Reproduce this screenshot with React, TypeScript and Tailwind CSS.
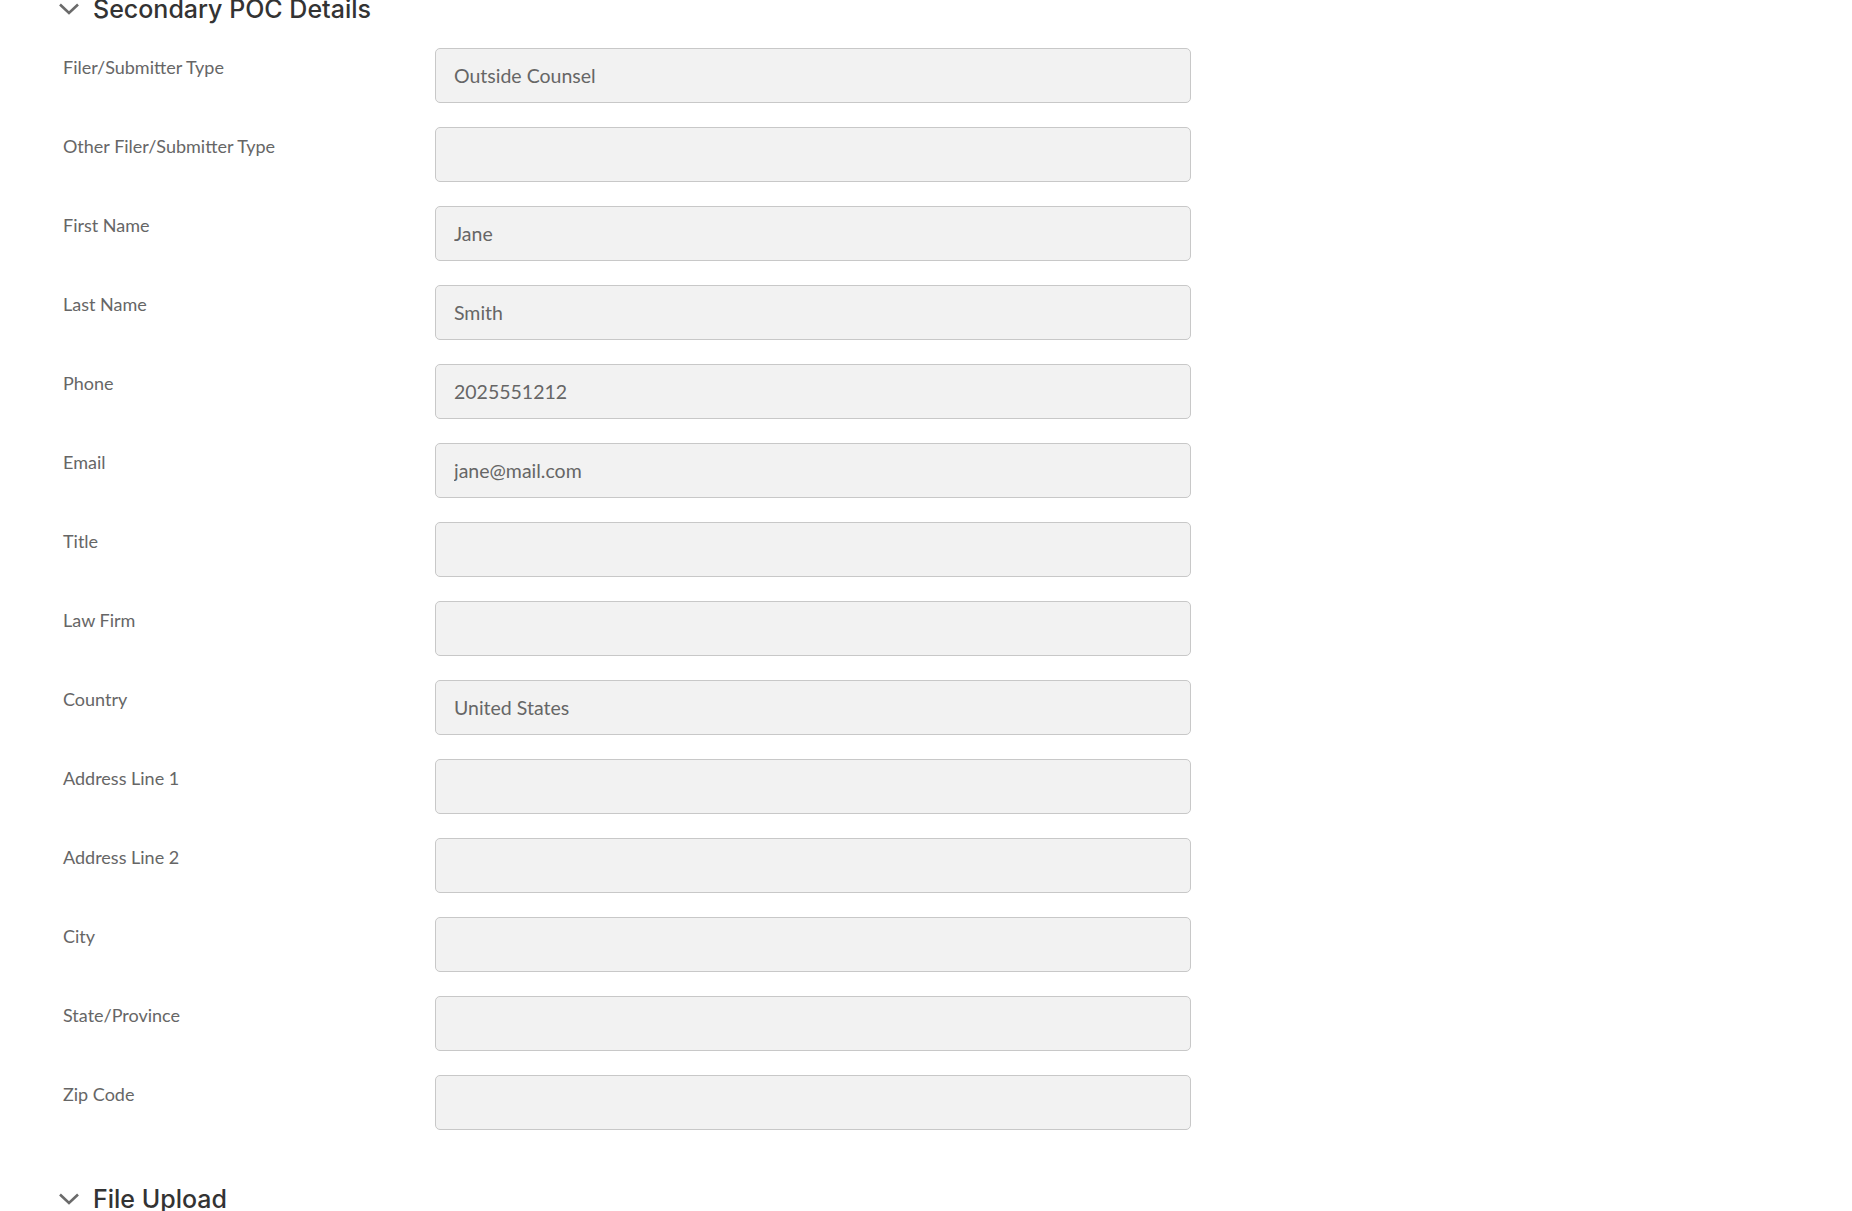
import React from 'react';

const fields: { label: string; value: string }[] = [
  { label: 'Filer/Submitter Type', value: 'Outside Counsel' },
  { label: 'Other Filer/Submitter Type', value: '' },
  { label: 'First Name', value: 'Jane' },
  { label: 'Last Name', value: 'Smith' },
  { label: 'Phone', value: '2025551212' },
  { label: 'Email', value: 'jane@mail.com' },
  { label: 'Title', value: '' },
  { label: 'Law Firm', value: '' },
  { label: 'Country', value: 'United States' },
  { label: 'Address Line 1', value: '' },
  { label: 'Address Line 2', value: '' },
  { label: 'City', value: '' },
  { label: 'State/Province', value: '' },
  { label: 'Zip Code', value: '' },
];

function Chevron() {
  return (
    <svg width="22" height="12" viewBox="0 0 22 12" fill="none" className="shrink-0">
      <path d="M2 1.5 L11 10 L20 1.5" stroke="#6b6b6b" strokeWidth="2.6" strokeLinecap="butt" />
    </svg>
  );
}

function SectionHeader({ title }: { title: string }) {
  return (
    <div className="flex items-center h-[34px] pl-[58px]">
      <Chevron />
      <h2 className="ml-[13px] text-[25px] leading-[34px] font-medium text-[#333] font-['Inter',sans-serif]">
        {title}
      </h2>
    </div>
  );
}

export default function App() {
  return (
    <div className="min-h-screen bg-white overflow-hidden">
      <div className="-mt-[8px]">
        <SectionHeader title="Secondary POC Details" />
        <div className="mt-[22px] flex flex-col gap-[24px]">
          {fields.map((f) => (
            <div key={f.label} className="flex items-start pl-[63px]">
              <label className="w-[372px] shrink-0 pt-[7px] text-[18px] leading-[24px] text-[#666] font-['Lato',sans-serif]">
                {f.label}
              </label>
              <input
                readOnly
                value={f.value}
                className="w-[756px] h-[55px] rounded-[5px] border border-[#c8c8c8] bg-[#f2f2f2] px-[18px] text-[19.5px] text-[#666] font-['Lato',sans-serif] outline-none"
              />
            </div>
          ))}
        </div>
        <div className="mt-[52px]">
          <SectionHeader title="File Upload" />
        </div>
      </div>
    </div>
  );
}
